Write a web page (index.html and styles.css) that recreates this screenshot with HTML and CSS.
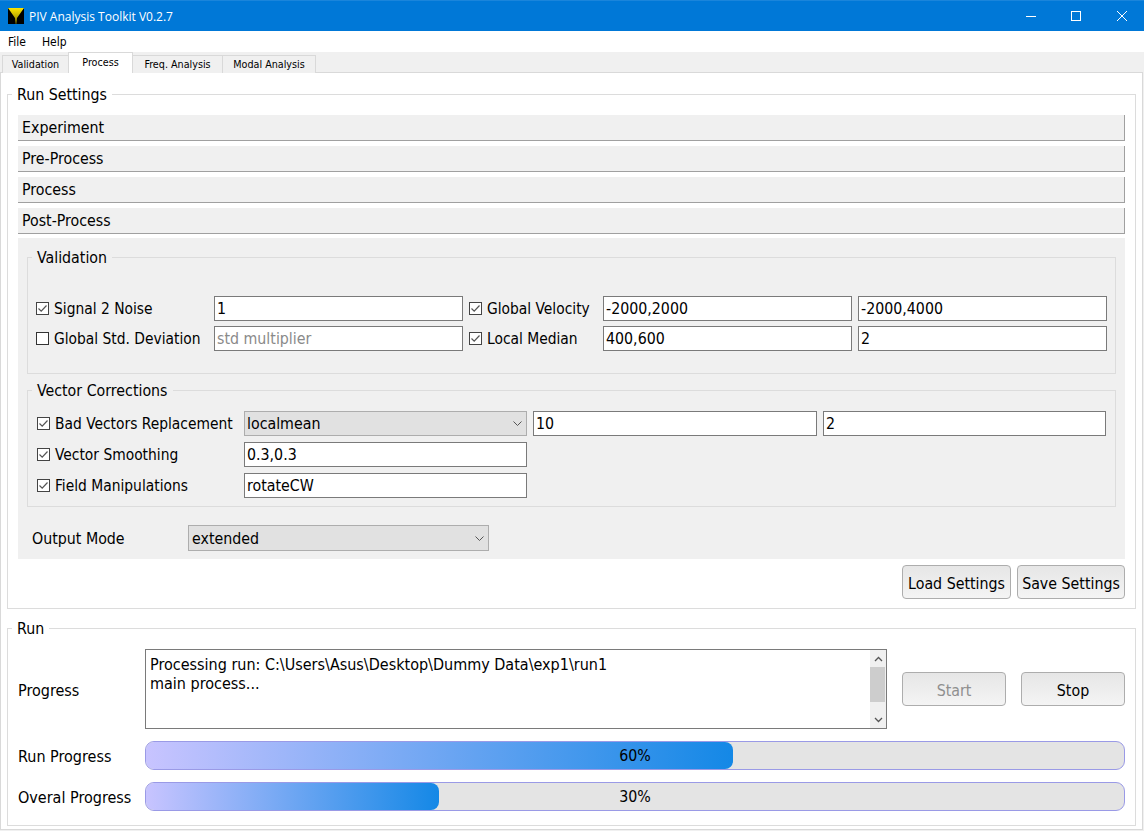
FILE: index.html
```html
<!DOCTYPE html>
<html lang="en">
<head>
<meta charset="utf-8">
<title>PIV Analysis Toolkit V0.2.7</title>
<link rel="stylesheet" href="styles.css">
</head>
<body>
<div class="window">
  <header class="titlebar">
    <svg class="app-icon" width="16" height="16" viewBox="0 0 16 16"><defs><linearGradient id="funnel" x1="0" y1="0" x2="0" y2="1"><stop offset="0" stop-color="#ffe600"/><stop offset="0.6" stop-color="#b5a400"/><stop offset="1" stop-color="#2a2600"/></linearGradient></defs><rect width="16" height="16" fill="#000"/><path d="M0 0H16L9 10V16H7V10Z" fill="url(#funnel)"/></svg>
    <span class="title-text">PIV Analysis Toolkit V0.2.7</span>
    <div class="win-controls">
      <span class="win-btn win-min"><svg width="12" height="12" viewBox="0 0 12 12"><path d="M1 6.500H11" stroke="#fff" fill="none"/></svg></span>
      <span class="win-btn"><svg width="12" height="12" viewBox="0 0 12 12"><rect x="1.500" y="1.500" width="9" height="9" stroke="#fff" fill="none"/></svg></span>
      <span class="win-btn"><svg width="12" height="12" viewBox="0 0 12 12"><path d="M1 1L11 11M11 1L1 11" stroke="#fff" fill="none"/></svg></span>
    </div>
  </header>
  <nav class="menubar"><span class="menu-item">File</span><span class="menu-item">Help</span></nav>
  <div class="tabbar">
    <span class="tab tab-first">Validation</span>
    <span class="tab tab-active">Process</span>
    <span class="tab tab-freq">Freq. Analysis</span>
    <span class="tab tab-modal">Modal Analysis</span>
  </div>
  <main class="pane">
    <fieldset class="group group-settings">
      <legend>Run Settings</legend>
      <div class="acc-head">Experiment</div>
      <div class="acc-head">Pre-Process</div>
      <div class="acc-head">Process</div>
      <div class="acc-head">Post-Process</div>
      <div class="acc-body">
        <fieldset class="group inner validation">
          <legend>Validation</legend>
          <div class="val-grid">
            <label class="check"><span class="box on"><svg width="13" height="13" viewBox="0 0 13 13"><path d="M2.500 6.500L5.200 9.200L10.500 3.500" fill="none" stroke="#555" stroke-width="1.200"/></svg></span>Signal 2 Noise</label>
            <input class="field" value="1">
            <label class="check"><span class="box on"><svg width="13" height="13" viewBox="0 0 13 13"><path d="M2.500 6.500L5.200 9.200L10.500 3.500" fill="none" stroke="#555" stroke-width="1.200"/></svg></span>Global Velocity</label>
            <input class="field" value="-2000,2000">
            <input class="field" value="-2000,4000">
            <label class="check"><span class="box"></span>Global Std. Deviation</label>
            <input class="field" placeholder="std multiplier">
            <label class="check"><span class="box on"><svg width="13" height="13" viewBox="0 0 13 13"><path d="M2.500 6.500L5.200 9.200L10.500 3.500" fill="none" stroke="#555" stroke-width="1.200"/></svg></span>Local Median</label>
            <input class="field" value="400,600">
            <input class="field" value="2">
          </div>
        </fieldset>
        <fieldset class="group inner corrections">
          <legend>Vector Corrections</legend>
          <div class="vec-grid">
            <label class="check"><span class="box on"><svg width="13" height="13" viewBox="0 0 13 13"><path d="M2.500 6.500L5.200 9.200L10.500 3.500" fill="none" stroke="#555" stroke-width="1.200"/></svg></span>Bad Vectors Replacement</label>
            <div class="combo">localmean<svg class="chev" width="9" height="5" viewBox="0 0 9 5"><path d="M0.500 0.500L4.500 4.500L8.500 0.500" fill="none" stroke="#555"/></svg></div>
            <input class="field" value="10">
            <input class="field" value="2">
            <label class="check"><span class="box on"><svg width="13" height="13" viewBox="0 0 13 13"><path d="M2.500 6.500L5.200 9.200L10.500 3.500" fill="none" stroke="#555" stroke-width="1.200"/></svg></span>Vector Smoothing</label>
            <input class="field" value="0.3,0.3">
            <span class="filler"></span>
            <label class="check"><span class="box on"><svg width="13" height="13" viewBox="0 0 13 13"><path d="M2.500 6.500L5.200 9.200L10.500 3.500" fill="none" stroke="#555" stroke-width="1.200"/></svg></span>Field Manipulations</label>
            <input class="field" value="rotateCW">
            <span class="filler"></span>
          </div>
        </fieldset>
        <div class="output-row">
          <span class="output-label">Output Mode</span>
          <div class="combo combo-output">extended<svg class="chev" width="9" height="5" viewBox="0 0 9 5"><path d="M0.500 0.500L4.500 4.500L8.500 0.500" fill="none" stroke="#555"/></svg></div>
        </div>
      </div>
      <div class="settings-actions">
        <button class="btn btn-load">Load Settings</button>
        <button class="btn btn-save">Save Settings</button>
      </div>
    </fieldset>
    <fieldset class="group group-run">
      <legend>Run</legend>
      <div class="log-row">
        <span class="row-label">Progress</span>
        <div class="log">
          <div class="log-text">Processing run: C:\Users\Asus\Desktop\Dummy Data\exp1\run1<br>main process...</div>
          <div class="scrollbar">
            <svg width="9" height="6" viewBox="0 0 9 6"><path d="M1 5L4.500 1.500L8 5" fill="none" stroke="#555" stroke-width="1.300"/></svg>
            <div class="thumb"></div>
            <span class="track"></span>
            <svg width="9" height="6" viewBox="0 0 9 6"><path d="M1 1L4.500 4.500L8 1" fill="none" stroke="#555" stroke-width="1.300"/></svg>
          </div>
        </div>
        <button class="btn btn-run" disabled>Start</button>
        <button class="btn btn-run">Stop</button>
      </div>
      <div class="progress-row">
        <span class="row-label">Run Progress</span>
        <div class="bar"><div class="chunk" style="width:60%"></div><span class="bar-text">60%</span></div>
      </div>
      <div class="progress-row">
        <span class="row-label">Overal Progress</span>
        <div class="bar"><div class="chunk" style="width:30%"></div><span class="bar-text">30%</span></div>
      </div>
    </fieldset>
  </main>
</div>
</body>
</html>
```
FILE: styles.css
```css
* { box-sizing: border-box; }
html, body { margin: 0; padding: 0; }
body {
  width: 1144px;
  height: 831px;
  overflow: hidden;
  background: #f0f0f0;
  font-family: "DejaVu Sans Condensed", "DejaVu Sans", sans-serif;
  font-stretch: condensed;
  font-size: 15.8px;
  color: #000;
}
.window { display: flex; flex-direction: column; height: 831px; }

.titlebar {
  height: 31px;
  flex: none;
  background: #0078d7;
  border-top: 1px solid #1a85db;
  display: flex;
  align-items: center;
  padding-left: 8px;
  color: #fff;
}
.app-icon { flex: none; display: block; }
.title-text { margin-left: 5px; font-size: 12px; font-family: "Open Sans", "Noto Sans", sans-serif; font-stretch: normal; }
.win-controls { margin-left: auto; margin-right: -1px; display: flex; }
.win-btn { width: 46px; height: 30px; display: flex; align-items: center; justify-content: center; }
.win-min { padding-left: 2px; }

.menubar {
  height: 21px;
  flex: none;
  background: #fff;
  display: flex;
  align-items: center;
  font-size: 12px;
  padding-left: 1px;
}
.menu-item { padding: 0 7px; }
.menu-item + .menu-item { padding-left: 9px; }

.tabbar {
  height: 21px;
  flex: none;
  display: flex;
  align-items: flex-end;
  padding-left: 2px;
  font-size: 10.7px;
  position: relative;
  z-index: 1;
}
.tab {
  height: 18px;
  padding-bottom: 1px;
  display: flex;
  align-items: center;
  justify-content: center;
  background: #f0f0f0;
  border: 1px solid #d9d9d9;
  border-bottom: 0;
  margin-left: -1px;
}
.tab-first { width: 67px; margin-left: 0; }
.tab-active { width: 65px; height: 21px; background: #fff; }
.tab-freq { width: 91px; }
.tab-modal { width: 94px; }

.pane {
  margin: -1px 1px 1px 0;
  flex: 1;
  background: #fff;
  border: 1px solid #d9d9d9;
  padding: 11px 6px 3px;
  display: flex;
  flex-direction: column;
  gap: 9px;
}

.group {
  margin: 0;
  padding: 0;
  min-width: 0;
  border: 1px solid #dcdcdc;
}
.group > legend {
  margin-left: -6px;
  padding: 2px 5px 0;
  line-height: 18px;
}
.group-settings { height: 525px; padding: 11px 10px 0; }
.group-run { height: 208px; padding: 11px 10px 0; }

.acc-head {
  height: 26px;
  margin-bottom: 5px;
  padding: 1px 0 0 4px;
  background: #f0f0f0;
  border-bottom: 1px solid #a0a0a0;
  border-right: 1px solid #a0a0a0;
  line-height: 24px;
}
.acc-body {
  height: 321px;
  margin-top: -1px;
  background: #f0f0f0;
  padding: 9px 9px 0;
}
.inner { border-color: #dcdcdc; }
.group.inner > legend { margin-left: -4px; }
.validation { height: 127px; padding: 29px 0 0 8px; }
.corrections { height: 127px; margin-top: 6px; padding: 11px 0 0 8px; }

.val-grid {
  display: grid;
  grid-template-columns: 172px 249px 128px 249px 249px;
  grid-auto-rows: 25px;
  gap: 5px 6px;
}
.vec-grid {
  display: grid;
  grid-template-columns: 202px 283px 284px 283px;
  grid-auto-rows: 25px;
  gap: 6px 6px;
}
.filler { grid-column: span 2; }
.check { display: flex; align-items: center; white-space: nowrap; font-size: 15.4px; }
.vec-grid .check { padding-left: 1px; }
.box {
  width: 13px;
  height: 13px;
  flex: none;
  margin-right: 5px;
  background: #fff;
  border: 1px solid #333;
  position: relative;
}
.box.on { border-color: #444; }
.box svg { position: absolute; left: -1px; top: -1px; display: block; }

.field {
  width: 100%;
  height: 25px;
  margin: 0;
  padding: 0 2px;
  border: 1px solid #7a7a7a;
  border-radius: 0;
  background: #fff;
  font: inherit;
  color: #000;
  outline: none;
}
.field::placeholder { color: #8a8a8a; opacity: 1; }

.combo {
  height: 25px;
  padding: 0 3px 0 2px;
  display: flex;
  align-items: center;
  justify-content: space-between;
  background: #e1e1e1;
  border: 1px solid #adadad;
}
.combo-output { padding-left: 3px; }
.chev { margin-right: 1px; flex: none; }

.output-row { display: flex; align-items: center; margin-top: 18px; padding-left: 5px; }
.output-label { width: 156px; }
.combo-output { width: 301px; height: 26px; }

.settings-actions {
  display: flex;
  justify-content: flex-end;
  gap: 6px;
  margin-top: 6px;
}
.btn {
  height: 34px;
  padding: 2px 0 0;
  border: 1px solid #adadad;
  border-radius: 4px;
  background: linear-gradient(#e6e6e6, #f4f4f4);
  font: inherit;
  color: #000;
}
.btn:disabled { color: #8f8f8f; }
.btn-load { width: 109px; }
.btn-save { width: 108px; }
.btn-run { width: 104px; }

.log-row { display: flex; align-items: center; height: 80px; }
.row-label { width: 127px; flex: none; font-size: 16px; padding-top: 2px; }
.progress-row .row-label { padding-top: 1px; }
.log {
  width: 742px;
  height: 80px;
  flex: none;
  display: flex;
  margin-right: 15px;
  background: #fff;
  border: 1px solid #7a7a7a;
}
.log-text { flex: 1; padding: 5px 4px; line-height: 19px; font-size: 16px; }
.scrollbar {
  width: 16px;
  display: grid;
  grid-template-rows: 17px 35px 1fr 17px;
  justify-items: center;
  align-items: center;
  background: #f0f0f0;
}
.thumb { width: 15px; height: 35px; background: #cdcdcd; justify-self: start; }
.btn-run + .btn-run { margin-left: 15px; }

.progress-row { display: flex; align-items: center; height: 29px; margin-top: 12px; }
.bar {
  flex: none;
  width: 980px;
  height: 29px;
  position: relative;
  background: #e4e4e4;
  border: 1px solid #9a9ae6;
  border-radius: 9px;
  overflow: hidden;
}
.chunk {
  height: 100%;
  border-radius: 8px;
  background: linear-gradient(90deg, #c8c4ff, #1488e6);
}
.bar-text {
  position: absolute;
  inset: 0;
  display: flex;
  align-items: center;
  justify-content: center;
}
```
